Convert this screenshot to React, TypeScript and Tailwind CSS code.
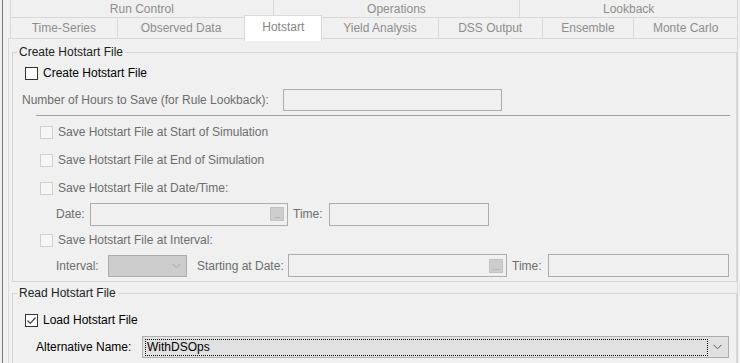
import React from "react";

const row1 = [
  { label: "Run Control", w: "w-[263px]" },
  { label: "Operations", w: "w-[247px]" },
  { label: "Lookback", w: "w-[218px]" },
];

const row2 = [
  { label: "Time-Series", w: "w-[107px]" },
  { label: "Observed Data", w: "w-[128px]" },
  { label: "Hotstart", w: "w-[76px]", active: true },
  { label: "Yield Analysis", w: "w-[117px]" },
  { label: "DSS Output", w: "w-[104px]" },
  { label: "Ensemble", w: "w-[92px]" },
  { label: "Monte Carlo", w: "w-[104px]" },
];

function CheckBox({ checked, disabled }: { checked?: boolean; disabled?: boolean }) {
  return (
    <span
      className={`w-[13px] h-[13px] shrink-0 border flex items-center justify-center ${
        disabled ? "border-[#d0d0d0] bg-[#f6f6f6]" : "border-[#333333] bg-white"
      }`}
    >
      {checked && (
        <svg width="11" height="11" viewBox="0 0 11 11">
          <path d="M1.5 5.5 L4.3 8.3 L9.5 2.5" fill="none" stroke="#444" strokeWidth="1.2" />
        </svg>
      )}
    </span>
  );
}

function Chevron({ color }: { color: string }) {
  return (
    <svg width="9" height="6" viewBox="0 0 9 6">
      <path d="M0.5 0.8 L4.5 4.8 L8.5 0.8" fill="none" stroke={color} strokeWidth="1" />
    </svg>
  );
}

function DotsButton() {
  return (
    <span className="w-[14px] h-[14px] mr-[3px] bg-[#cdcdcd] border border-[#c2c2c2] flex items-end justify-center text-[8px] leading-[9px] text-[#8a8a8a]">
      ...
    </span>
  );
}

function TextBox({ w, dots }: { w: string; dots?: boolean }) {
  return (
    <div className={`${w} h-[23px] border border-[#adadad] flex items-center justify-end`}>
      {dots && <DotsButton />}
    </div>
  );
}

function CheckRow({ label }: { label: string }) {
  return (
    <div className="h-[28px] pl-[27px] flex items-center gap-[5px] text-[#6d6d6d]">
      <CheckBox disabled />
      <span>{label}</span>
    </div>
  );
}

export default function App() {
  return (
    <div className="w-[740px] h-[363px] overflow-hidden bg-[#f0f0f0] pl-[2px] font-['Liberation_Sans',Arial,sans-serif] text-[12px] leading-[14px]">
      <div className="h-full border-l border-[#7a7a7a] pl-[5px] pr-[2px]">
        {/* tabs */}
        <div className="ml-[2px] w-[728px] text-[#8e8e8e]">
          <div className="flex h-[18px] border-l border-[#d9d9d9]">
            {row1.map((t) => (
              <div key={t.label} className={`${t.w} border-r border-b border-[#d9d9d9] flex items-center justify-center`}>
                {t.label}
              </div>
            ))}
          </div>
          <div className="flex h-[20px] border-l border-[#d9d9d9]">
            {row2.map((t) =>
              t.active ? (
                <div
                  key={t.label}
                  className="relative z-10 -ml-[1px] w-[78px] -mt-[3px] h-[26px] bg-white border-t border-l border-r border-[#d9d9d9] flex justify-center pt-[4px] text-[#858585]"
                >
                  {t.label}
                </div>
              ) : (
                <div key={t.label} className={`${t.w} border-r border-[#d9d9d9] flex items-center justify-center`}>
                  {t.label}
                </div>
              )
            )}
          </div>
        </div>

        {/* panel */}
        <div className="h-[400px] border-t border-l border-r border-[#d9d9d9] pl-[3px] pt-[6px]">
          <fieldset className="w-[725px] border border-[#d5d5d5] pb-[4px]">
            <legend className="ml-[4px] px-[2px] text-[#222]">Create Hotstart File</legend>
            <div className="mt-[6px] h-[16px] pl-[12px] flex items-center gap-[5px] text-black">
              <CheckBox />
              <span>Create Hotstart File</span>
            </div>
            <div className="mt-[8px] h-[22px] pl-[9px] flex items-center text-[#6d6d6d]">
              <span className="w-[261px]">Number of Hours to Save (for Rule Lookback):</span>
              <div className="w-[219px] h-[22px] border border-[#adadad]" />
            </div>
            <div className="mt-[4px] ml-[23px] w-[694px] h-0 border-t border-[#a0a0a0]" />
            <div className="mt-[2px]">
              <CheckRow label="Save Hotstart File at Start of Simulation" />
              <CheckRow label="Save Hotstart File at End of Simulation" />
              <CheckRow label="Save Hotstart File at Date/Time:" />
              <div className="h-[24px] pl-[43px] flex items-center text-[#6d6d6d]">
                <span className="w-[34px]">Date:</span>
                <TextBox w="w-[198px]" dots />
                <span className="ml-[5px] w-[36px]">Time:</span>
                <TextBox w="w-[160px]" />
              </div>
              <CheckRow label="Save Hotstart File at Interval:" />
              <div className="h-[23px] pl-[43px] flex items-center text-[#6d6d6d]">
                <span className="w-[52px]">Interval:</span>
                <div className="w-[79px] h-[22px] bg-[#cccccc] border border-[#adadad] flex items-center justify-end pr-[5px]">
                  <Chevron color="#a8a8a8" />
                </div>
                <span className="ml-[10px] w-[91px]">Starting at Date:</span>
                <TextBox w="w-[219px]" dots />
                <span className="ml-[5px] w-[36px]">Time:</span>
                <TextBox w="w-[181px]" />
              </div>
            </div>
          </fieldset>

          <fieldset className="mt-[4px] w-[725px] border border-[#d5d5d5] pb-[10px]">
            <legend className="ml-[4px] px-[2px] text-[#222]">Read Hotstart File</legend>
            <div className="mt-[12px] h-[16px] pl-[12px] flex items-center gap-[5px] text-black">
              <CheckBox checked />
              <span>Load Hotstart File</span>
            </div>
            <div className="mt-[8px] h-[22px] pl-[23px] flex items-center text-black">
              <span className="w-[106px]">Alternative Name:</span>
              <div className="w-[587px] h-[22px] bg-[#e1e1e1] border border-[#adadad] flex items-center pl-[2px] pr-[6px]">
                <div className="flex-1 h-[17px] border border-dotted border-black flex items-center pl-[1px]">
                  WithDSOps
                </div>
                <div className="ml-[5px]">
                  <Chevron color="#555555" />
                </div>
              </div>
            </div>
          </fieldset>
        </div>
      </div>
    </div>
  );
}
